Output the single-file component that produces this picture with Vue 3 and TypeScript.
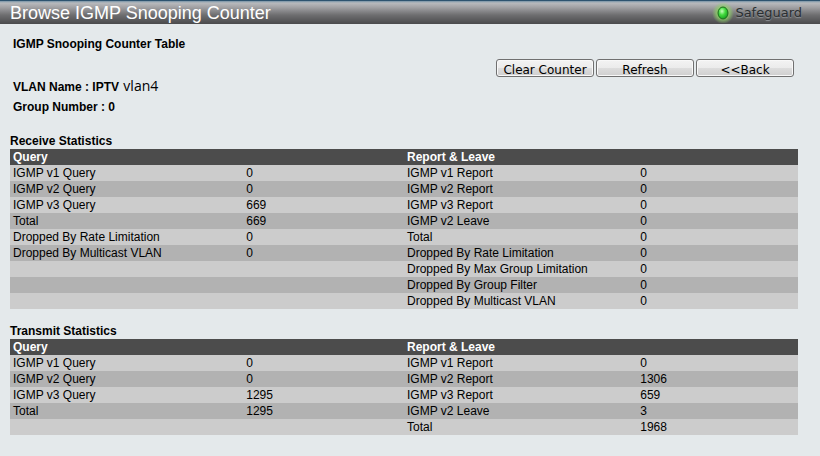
<script setup lang="ts">
interface Counter {
  label: string
  value: number
}

interface Section {
  title: string
  query: Counter[]
  report: Counter[]
}

const c = (label: string, value: number): Counter => ({ label, value })

const sections: Section[] = [
  {
    title: 'Receive Statistics',
    query: [
      c('IGMP v1 Query', 0),
      c('IGMP v2 Query', 0),
      c('IGMP v3 Query', 669),
      c('Total', 669),
      c('Dropped By Rate Limitation', 0),
      c('Dropped By Multicast VLAN', 0),
    ],
    report: [
      c('IGMP v1 Report', 0),
      c('IGMP v2 Report', 0),
      c('IGMP v3 Report', 0),
      c('IGMP v2 Leave', 0),
      c('Total', 0),
      c('Dropped By Rate Limitation', 0),
      c('Dropped By Max Group Limitation', 0),
      c('Dropped By Group Filter', 0),
      c('Dropped By Multicast VLAN', 0),
    ],
  },
  {
    title: 'Transmit Statistics',
    query: [
      c('IGMP v1 Query', 0),
      c('IGMP v2 Query', 0),
      c('IGMP v3 Query', 1295),
      c('Total', 1295),
    ],
    report: [
      c('IGMP v1 Report', 0),
      c('IGMP v2 Report', 1306),
      c('IGMP v3 Report', 659),
      c('IGMP v2 Leave', 3),
      c('Total', 1968),
    ],
  },
]

const actions: string[] = ['Clear Counter', 'Refresh', '<<Back']
</script>

<template>
  <div class="page">
    <header class="bar">
      <h1>Browse IGMP Snooping Counter</h1>
      <div class="safeguard">
        <svg class="lamp" width="24" height="20" viewBox="0 0 24 20" aria-hidden="true">
          <defs>
            <radialGradient id="glow">
              <stop offset="0.5" stop-color="#8fd06a" stop-opacity="0.9" />
              <stop offset="1" stop-color="#8fd06a" stop-opacity="0" />
            </radialGradient>
            <radialGradient id="bulb" cx="0.4" cy="0.35" r="0.7">
              <stop offset="0" stop-color="#c8ffbc" />
              <stop offset="0.45" stop-color="#45dc40" />
              <stop offset="1" stop-color="#109a1a" />
            </radialGradient>
          </defs>
          <ellipse cx="12" cy="10" rx="11" ry="11" fill="url(#glow)" />
          <ellipse cx="12" cy="10" rx="5" ry="6" fill="url(#bulb)" stroke="#1f6a20" />
        </svg>
        <span class="brand">Safeguard</span>
      </div>
    </header>

    <main>
      <section class="summary">
        <h2>IGMP Snooping Counter Table</h2>
        <div class="actions">
          <button v-for="a in actions" :key="a" type="button">{{ a }}</button>
        </div>
        <p>VLAN Name : IPTV <span class="vlan">vlan4</span></p>
        <p>Group Number : 0</p>
      </section>

      <table v-for="s in sections" :key="s.title">
        <caption>{{ s.title }}</caption>
        <colgroup>
          <col class="name" /><col class="count" /><col class="name" /><col class="count" />
        </colgroup>
        <thead>
          <tr>
            <th colspan="2">Query</th>
            <th colspan="2">Report &amp; Leave</th>
          </tr>
        </thead>
        <tbody>
          <tr v-for="(r, i) in s.report" :key="r.label">
            <td>{{ s.query[i]?.label }}</td>
            <td>{{ s.query[i]?.value }}</td>
            <td>{{ r.label }}</td>
            <td>{{ r.value }}</td>
          </tr>
        </tbody>
      </table>
    </main>
  </div>
</template>

<style>
body {
  background: #e4e9eb;
}
</style>

<style scoped>
.page {
  font: 12px/16px "Liberation Sans", Arial, sans-serif;
  color: #000;
}

.bar {
  box-sizing: border-box;
  height: 24px;
  display: flex;
  align-items: center;
  justify-content: space-between;
  padding: 0 18px 0 10px;
  border-top: 1px solid #2d536f;
  background: linear-gradient(#7893a6 0, #b8babd 2px, #a3a3a6 6px, #6e6e70 14px, #4a4a4c 100%);
}

h1 {
  margin: 0;
  font-size: 18px;
  line-height: 22px;
  font-weight: 400;
  color: #fff;
}

.safeguard {
  display: flex;
  align-items: center;
}

.lamp {
  display: block;
}

.brand {
  font: 13px/20px "DejaVu Sans", Verdana, sans-serif;
  color: #2b2f32;
  text-shadow: 0 1px 1px #92979b;
}

main {
  padding: 12px 22px 20px 10px;
}

.summary {
  padding: 0 4px 0 3px;
  margin-bottom: 16px;
}

h2 {
  margin: 0;
  font-size: 12px;
  line-height: 16px;
}

.actions {
  display: flex;
  justify-content: flex-end;
  gap: 2px;
  margin-top: 7px;
}

button {
  box-sizing: border-box;
  width: 98px;
  height: 18px;
  padding: 2px 0 0;
  border: 1px solid #707070;
  border-radius: 3px;
  background: linear-gradient(#f3f3f3 0, #ebebeb 50%, #dddddd 50%, #cfcfcf 100%);
  box-shadow: inset 0 0 0 1px #f8f8f8;
  font: 12px/16px "DejaVu Sans", Verdana, sans-serif;
  color: #000;
}

p {
  margin: 0;
  line-height: 20px;
  font-weight: 700;
}

.vlan {
  margin-left: 1px;
  font: 14px/16px "Open Sans", "Segoe UI", sans-serif;
}

table {
  width: 100%;
  table-layout: fixed;
  border-collapse: collapse;
}

table + table {
  margin-top: 14px;
}

.name {
  width: 29.6%;
}

.count {
  width: 20.4%;
}

caption {
  font-weight: 700;
  text-align: left;
}

th,
td {
  height: 16px;
  padding: 0 3px;
  text-align: left;
}

thead {
  background: #4c4c4c;
  color: #fff;
}

tbody tr {
  background: #ccc;
}

tbody tr:nth-child(even) {
  background: #b2b2b2;
}
</style>
